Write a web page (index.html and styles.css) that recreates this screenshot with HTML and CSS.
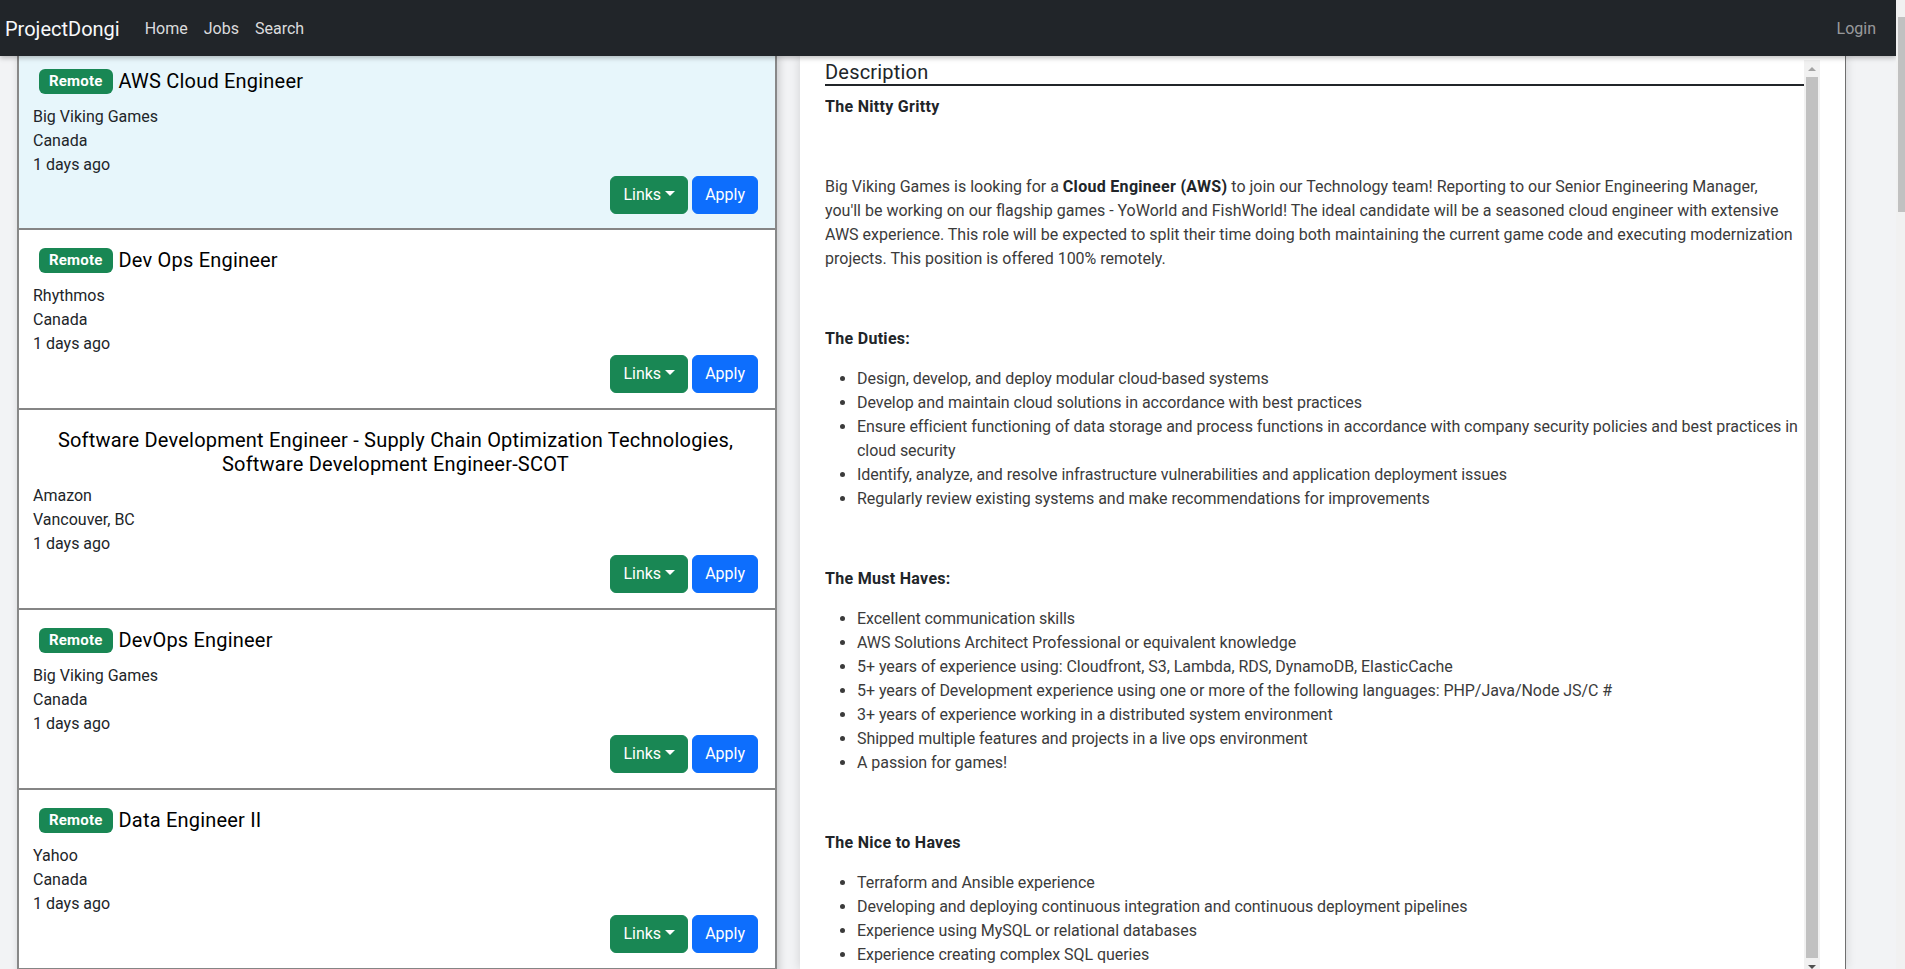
FILE: index.html
```html
<!DOCTYPE html>
<html lang="en">
<head>
<meta charset="utf-8">
<title>ProjectDongi</title>
<link rel="stylesheet" href="styles.css">
</head>
<body>
<div class="page">
  <div class="app">
    <nav class="navbar">
      <a class="brand" href="#">ProjectDongi</a>
      <a class="nav-link" href="#">Home</a>
      <a class="nav-link" href="#">Jobs</a>
      <a class="nav-link" href="#">Search</a>
      <a class="nav-link login" href="#">Login</a>
    </nav>
    <div class="main">
      <div class="list">
        <div class="card active">
          <div class="title"><span class="badge">Remote</span><span>AWS Cloud Engineer</span></div>
          <div class="line">Big Viking Games</div>
          <div class="line">Canada</div>
          <div class="line">1 days ago</div>
          <div class="actions"><button class="btn btn-links">Links<span class="caret"></span></button><button class="btn btn-apply">Apply</button></div>
        </div>
        <div class="card">
          <div class="title"><span class="badge">Remote</span><span>Dev Ops Engineer</span></div>
          <div class="line">Rhythmos</div>
          <div class="line">Canada</div>
          <div class="line">1 days ago</div>
          <div class="actions"><button class="btn btn-links">Links<span class="caret"></span></button><button class="btn btn-apply">Apply</button></div>
        </div>
        <div class="card">
          <div class="title-center">Software Development Engineer - Supply Chain Optimization Technologies, Software Development Engineer-SCOT</div>
          <div class="line">Amazon</div>
          <div class="line">Vancouver, BC</div>
          <div class="line">1 days ago</div>
          <div class="actions"><button class="btn btn-links">Links<span class="caret"></span></button><button class="btn btn-apply">Apply</button></div>
        </div>
        <div class="card">
          <div class="title"><span class="badge">Remote</span><span>DevOps Engineer</span></div>
          <div class="line">Big Viking Games</div>
          <div class="line">Canada</div>
          <div class="line">1 days ago</div>
          <div class="actions"><button class="btn btn-links">Links<span class="caret"></span></button><button class="btn btn-apply">Apply</button></div>
        </div>
        <div class="card">
          <div class="title"><span class="badge">Remote</span><span>Data Engineer II</span></div>
          <div class="line">Yahoo</div>
          <div class="line">Canada</div>
          <div class="line">1 days ago</div>
          <div class="actions"><button class="btn btn-links">Links<span class="caret"></span></button><button class="btn btn-apply">Apply</button></div>
        </div>
        <div class="card card-empty"></div>
      </div>
      <div class="detail">
        <div class="scrollbox">
          <div class="doc">
            <h5 class="detail-title">Description</h5>
            <p><strong>The Nitty Gritty</strong></p>
            <p><br></p>
            <p>Big Viking Games is looking for a <strong>Cloud Engineer (AWS)</strong> to join our Technology team! Reporting to our Senior Engineering Manager,<br>you'll be working on our flagship games - YoWorld and FishWorld! The ideal candidate will be a seasoned cloud engineer with extensive<br>AWS experience. This role will be expected to split their time doing both maintaining the current game code and executing modernization<br>projects. This position is offered 100% remotely.</p>
            <p><br></p>
            <p><strong>The Duties:</strong></p>
            <ul>
              <li>Design, develop, and deploy modular cloud-based systems</li>
              <li>Develop and maintain cloud solutions in accordance with best practices</li>
              <li>Ensure efficient functioning of data storage and process functions in accordance with company security policies and best practices in cloud security</li>
              <li>Identify, analyze, and resolve infrastructure vulnerabilities and application deployment issues</li>
              <li>Regularly review existing systems and make recommendations for improvements</li>
            </ul>
            <p><br></p>
            <p><strong>The Must Haves:</strong></p>
            <ul>
              <li>Excellent communication skills</li>
              <li>AWS Solutions Architect Professional or equivalent knowledge</li>
              <li>5+ years of experience using: Cloudfront, S3, Lambda, RDS, DynamoDB, ElasticCache</li>
              <li>5+ years of Development experience using one or more of the following languages: PHP/Java/Node JS/C #</li>
              <li>3+ years of experience working in a distributed system environment</li>
              <li>Shipped multiple features and projects in a live ops environment</li>
              <li>A passion for games!</li>
            </ul>
            <p><br></p>
            <p><strong>The Nice to Haves</strong></p>
            <ul>
              <li>Terraform and Ansible experience</li>
              <li>Developing and deploying continuous integration and continuous deployment pipelines</li>
              <li>Experience using MySQL or relational databases</li>
              <li>Experience creating complex SQL queries</li>
            </ul>
          </div>
          <div class="sbar">
            <div class="sbtn"><span class="arrow-up"></span></div>
            <div class="sthumb"></div>
            <div class="sbtn"><span class="arrow-down"></span></div>
          </div>
        </div>
      </div>
    </div>
  </div>
  <div class="vscroll"><div class="vthumb"></div></div>
</div>
</body>
</html>
```
FILE: styles.css
```css
html, body {
  margin: 0;
  height: 100%;
  overflow: hidden;
}
body {
  font-family: Roboto, "Noto Sans", "Liberation Sans", sans-serif;
  font-size: 16px;
  line-height: 24px;
  color: #212529;
  background: #f2f3f5;
}
.page {
  display: flex;
  height: 969px;
}
.app {
  flex: 0 0 1896px;
  display: flex;
  flex-direction: column;
  min-width: 0;
  overflow: hidden;
}
.vscroll {
  flex: 1;
  background: #f1f1f1;
}
.vthumb {
  margin: 17px 0 0 2px;
  height: 195px;
  background: #c1c1c1;
}
.navbar {
  flex: 0 0 56px;
  box-sizing: border-box;
  display: flex;
  align-items: center;
  padding: 2px 12px 0 5px;
  background: #212529;
  box-shadow: 0 2px 5px rgba(0, 0, 0, 0.25);
  position: relative;
  z-index: 2;
}
.navbar a {
  text-decoration: none;
}
.brand {
  font-size: 20px;
  line-height: 30px;
  color: #f8f9fa;
  margin-right: 17px;
}
.nav-link {
  padding: 8px;
  color: rgba(255, 255, 255, 0.85);
}
.nav-link.login {
  margin-left: auto;
  color: rgba(255, 255, 255, 0.55);
}
.main {
  flex: 1;
  display: flex;
  align-items: flex-start;
  gap: 23px;
  padding-left: 17px;
  min-height: 0;
}
.list {
  flex: 0 0 760px;
  box-sizing: border-box;
  background: #fff;
  border-left: 2px solid #888;
  border-right: 2px solid #888;
  box-shadow: 2px 0 8px rgba(0, 0, 0, 0.18);
}
.card {
  padding: 18px 17px 15px 14px;
  border-bottom: 2px solid #858585;
}
.card.active {
  background: #e7f6fb;
  padding-top: 13px;
  padding-bottom: 14px;
}
.card-empty {
  height: 120px;
}
.title {
  display: flex;
  align-items: flex-start;
  gap: 6px;
  padding-left: 6px;
  height: 28px;
  margin-bottom: 8px;
  font-size: 20px;
  line-height: 24px;
  font-weight: 400;
  letter-spacing: 0.2px;
  color: #000;
}
.title-center {
  text-align: center;
  font-size: 20px;
  line-height: 24px;
  font-weight: 400;
  letter-spacing: 0.2px;
  color: #000;
  margin-bottom: 8px;
}
.badge {
  display: inline-block;
  background: #198754;
  color: #fff;
  font-size: 15px;
  font-weight: 700;
  line-height: 15px;
  letter-spacing: 0.2px;
  padding: 5px 10px;
  border-radius: 6px;
}
.line {
  line-height: 24px;
}
.actions {
  display: flex;
  justify-content: flex-end;
  gap: 4px;
  margin-top: -1px;
}
.btn {
  font-family: inherit;
  font-size: 16px;
  line-height: 24px;
  padding: 6px 12px;
  border-radius: 6px;
  border: 1px solid transparent;
  color: #fff;
  cursor: pointer;
}
.btn-links {
  background: #198754;
  border-color: #198754;
}
.btn-apply {
  background: #0d6efd;
  border-color: #0d6efd;
}
.caret {
  display: inline-block;
  margin-left: 4px;
  vertical-align: 4px;
  border-top: 5px solid #fff;
  border-left: 5px solid transparent;
  border-right: 5px solid transparent;
}
.detail {
  flex: 0 0 1046px;
  box-sizing: border-box;
  align-self: stretch;
  background: #fff;
  border-right: 1px solid #6f6f6f;
  box-shadow: 0 0 10px rgba(0, 0, 0, 0.14);
  padding: 4px 25px 0 25px;
}
.scrollbox {
  height: 915px;
  display: flex;
  overflow: hidden;
  color: #3b3b3b;
}
.doc {
  flex: 1;
  min-width: 0;
}
.sbar {
  flex: 0 0 16px;
  background: #f1f1f1;
  display: flex;
  flex-direction: column;
  align-items: center;
}
.sbtn {
  flex: 0 0 17px;
  display: flex;
  align-items: center;
  justify-content: center;
}
.arrow-up {
  border-bottom: 4px solid #a3a3a3;
  border-left: 4px solid transparent;
  border-right: 4px solid transparent;
}
.arrow-down {
  border-top: 4px solid #505050;
  border-left: 4px solid transparent;
  border-right: 4px solid transparent;
}
.sthumb {
  flex: 0 0 881px;
  width: 12px;
  background: #c1c1c1;
}
.detail-title {
  margin: 0 0 9px;
  font-size: 20px;
  line-height: 24px;
  font-weight: 400;
  letter-spacing: 0.2px;
  color: #212529;
  border-bottom: 2px solid #212529;
}
.doc p {
  margin: 0 0 16px;
}
.doc strong {
  color: #212529;
  font-weight: 700;
  letter-spacing: 0.3px;
}
.doc ul {
  margin: 0 0 16px;
  padding-left: 32px;
}
.doc li {
  letter-spacing: -0.05px;
}
```
